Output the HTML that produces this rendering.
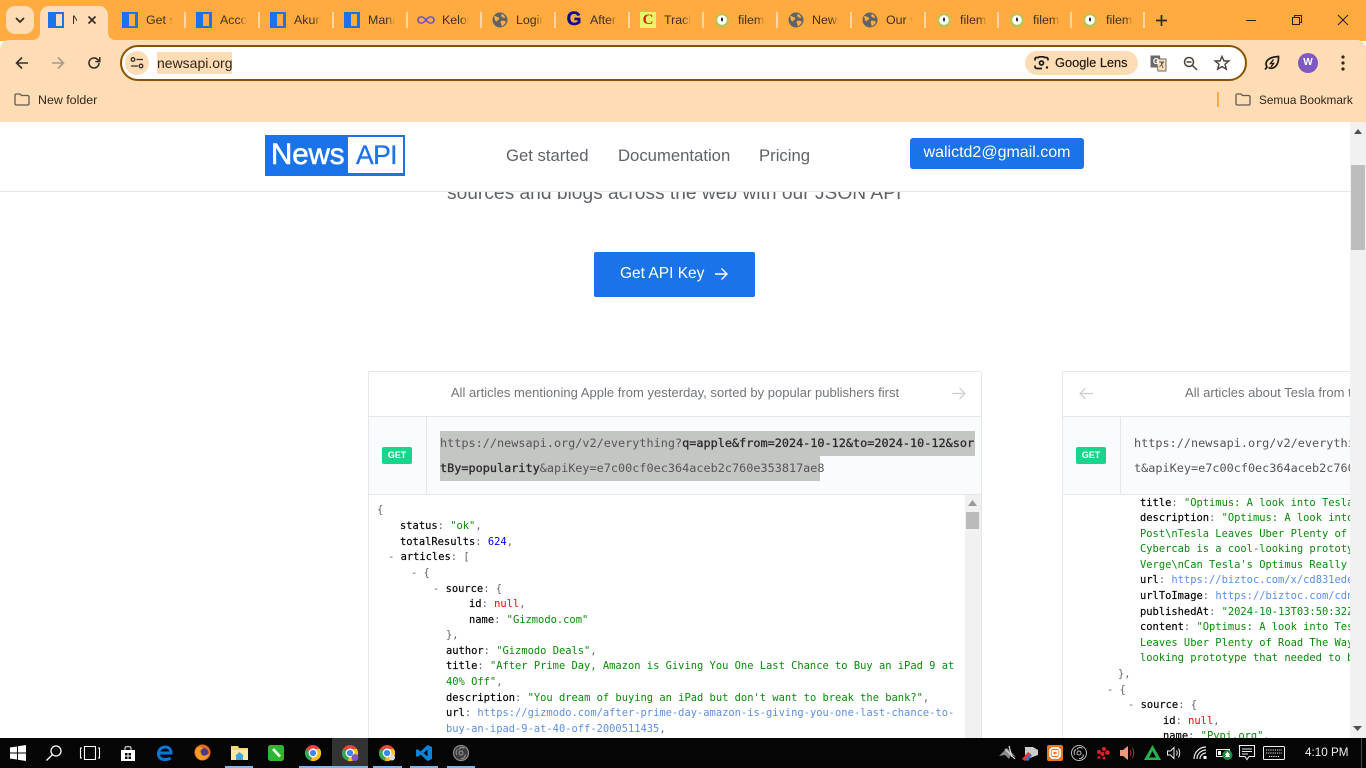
<!DOCTYPE html>
<html><head><meta charset="utf-8"><title>News API</title>
<style>
*{box-sizing:border-box}
html,body{margin:0;padding:0;width:1366px;height:768px;overflow:hidden;background:#fff;font-family:"Liberation Sans",sans-serif}
.a{position:absolute;white-space:nowrap}
svg{position:absolute;display:block;overflow:visible}
.tt{position:absolute;top:13px;width:27px;height:15px;overflow:hidden;font-size:12.4px;line-height:15px;color:#3e3022;white-space:pre;-webkit-mask-image:linear-gradient(90deg,#000 70%,transparent);mask-image:linear-gradient(90deg,#000 70%,transparent)}
.sep{position:absolute;top:12px;width:2px;height:16px;background:#ffd6a3}
.fav{position:absolute;top:12px;width:16px;height:16px;background:#1a73e8}
.fav i{position:absolute;left:7px;top:2px;width:6px;height:12px;background:#ffab40}
.j{position:absolute;margin-top:1px;font-family:"DejaVu Sans Mono","Liberation Mono",monospace;font-size:10.43px;line-height:15px;white-space:pre;color:#000;-webkit-text-stroke:.15px #000}
.s,.u,.r,.n,.p{-webkit-text-stroke:0}
.s{color:#0a8a0a}.u{color:#5b8fe6}.r{color:#f00}.n{color:#00f}.p{color:#666}
.url{position:absolute;font-family:"DejaVu Sans Mono","Liberation Mono",monospace;font-size:11.83px;line-height:25px;white-space:pre;color:#555}
.url b{color:#2a2a2a;font-weight:normal;-webkit-text-stroke:.3px #2a2a2a}
.get{position:absolute;top:447px;width:30px;height:17px;background:#17d68c;border-radius:2px;color:#fff;font-size:9px;font-weight:bold;line-height:17px;text-align:center}
.nav{position:absolute;top:146px;font-size:16.7px;line-height:20px;color:#5f6368;white-space:nowrap}
.ul{position:absolute;top:766px;height:2px;background:#76b9ed}
</style></head><body>

<!-- PAGE -->
<div class="a" style="left:0;top:122px;width:1366px;height:616px;background:#fff;overflow:hidden">
 <div class="a" style="left:0;width:1350px;top:-122px;height:768px">
  <div class="a" style="left:447px;top:183px;font-size:19.2px;line-height:22px;color:#5f6368;width:456px">sources and blogs across the web with our JSON API</div>
  <div class="a" style="left:0;top:122px;width:1350px;height:70px;background:#fff;border-bottom:1px solid #e6e6e6"></div>
  <div class="a" style="left:265px;top:135px;width:140px;height:41px;background:#1a73e8"></div>
  <div class="a" style="left:348px;top:137px;width:55px;height:36px;background:#fff"></div>
  <div class="a" style="left:271px;top:137px;font-size:29.5px;line-height:36px;color:#fff;-webkit-text-stroke:.6px #fff;letter-spacing:-.1px">News</div>
  <div class="a" style="left:356px;top:137px;font-size:26.5px;line-height:36px;color:#1a73e8;-webkit-text-stroke:.3px #1a73e8;letter-spacing:-.6px">API</div>
  <div class="nav" style="left:506px">Get started</div>
  <div class="nav" style="left:618px">Documentation</div>
  <div class="nav" style="left:759px">Pricing</div>
  <div class="a" style="left:910px;top:138px;width:174px;height:31px;background:#1a73e8;border-radius:3px;color:#fff;font-size:16px;line-height:30px;text-align:center">walictd2@gmail.com</div>
  <div class="a" style="left:594px;top:252px;width:161px;height:45px;background:#1a73e8;border-radius:2px"></div>
  <div class="a" style="left:620px;top:264px;font-size:15.5px;line-height:20px;color:#fff">Get API Key</div>
  <svg style="left:714px;top:267px" width="14" height="14" viewBox="0 0 14 14" fill="none" stroke="#fff" stroke-width="1.4"><path d="M1 7H13M7.5 1.5L13 7L7.5 12.5"/></svg>

  <!-- Card 1 -->
  <div class="a" style="left:368px;top:371px;width:614px;height:400px;background:#fff;border:1px solid #e4e6e9;border-radius:2px"></div>
  <div class="a" style="left:369px;top:416px;width:612px;height:79px;background:#fafbfd;border-top:1px solid #e4e6e9;border-bottom:1px solid #e4e6e9"></div>
  <div class="a" style="left:426px;top:417px;width:1px;height:77px;background:#e4e6e9"></div>
  <div class="a" style="left:369px;top:383px;width:612px;text-align:center;font-size:13px;line-height:20px;color:#70757a;letter-spacing:.025px">All articles mentioning Apple from yesterday, sorted by popular publishers first</div>
  <svg style="left:952px;top:387px" width="14" height="13" viewBox="0 0 14 13" fill="none" stroke="#ccc" stroke-width="1.2"><path d="M0 6.5H13M7.5 1L13 6.5L7.5 12"/></svg>
  <div class="get" style="left:382px">GET</div>
  <div class="a" style="left:440px;top:431px;width:535px;height:25px;background:#c4c6c4"></div>
  <div class="a" style="left:440px;top:456px;width:380px;height:25px;background:#c4c6c4"></div>
  <div class="url" style="left:440px;top:431px">https://newsapi.org/v2/everything?<b>q=apple&amp;from=2024-10-12&amp;to=2024-10-12&amp;sor</b></div>
  <div class="url" style="left:440px;top:456px"><b>tBy=popularity</b>&amp;apiKey=e7c00cf0ec364aceb2c760e353817ae8</div>

  <div class="a" style="left:965px;top:495px;width:16px;height:250px;background:#f1f1f1"></div>
  <svg style="left:968px;top:500px" width="9" height="6"><path d="M0 6L4.5 0L9 6Z" fill="#999"/></svg>
  <div class="a" style="left:966px;top:512px;width:13px;height:17px;background:#bbb"></div>

  <div class="j" style="left:377px;top:502px;color:#666;-webkit-text-stroke:0">{</div>
  <div class="j" style="left:400px;top:518px">status<span class="p">: </span><span class="s">"ok"</span><span class="p">,</span></div>
  <div class="j" style="left:400px;top:534px">totalResults<span class="p">: </span><span class="n">624</span><span class="p">,</span></div>
  <div class="j" style="left:388px;top:549px"><span class="p">- </span>articles<span class="p">: [</span></div>
  <div class="j p" style="left:411px;top:565px;color:#666">- {</div>
  <div class="j" style="left:433px;top:581px"><span class="p">- </span>source<span class="p">: {</span></div>
  <div class="j" style="left:469px;top:596px">id<span class="p">: </span><span class="r">null</span><span class="p">,</span></div>
  <div class="j" style="left:469px;top:612px">name<span class="p">: </span><span class="s">"Gizmodo.com"</span></div>
  <div class="j p" style="left:446px;top:627px;color:#666">},</div>
  <div class="j" style="left:446px;top:643px">author<span class="p">: </span><span class="s">"Gizmodo Deals"</span><span class="p">,</span></div>
  <div class="j" style="left:446px;top:658px">title<span class="p">: </span><span class="s">"After Prime Day, Amazon is Giving You One Last Chance to Buy an iPad 9 at</span></div>
  <div class="j s" style="left:446px;top:674px">40% Off"<span class="p">,</span></div>
  <div class="j" style="left:446px;top:690px">description<span class="p">: </span><span class="s">"You dream of buying an iPad but don't want to break the bank?"</span><span class="p">,</span></div>
  <div class="j" style="left:446px;top:705px">url<span class="p">: </span><span class="u">https://gizmodo.com/after-prime-day-amazon-is-giving-you-one-last-chance-to-</span></div>
  <div class="j u" style="left:446px;top:721px">buy-an-ipad-9-at-40-off-2000511435<span class="p">,</span></div>
  <div class="j" style="left:446px;top:737px">urlToImage<span class="p">: </span></div>

  <!-- Card 2 -->
  <div class="a" style="left:1062px;top:371px;width:400px;height:400px;background:#fff;border:1px solid #e4e6e9;border-radius:2px"></div>
  <div class="j" style="left:1140px;top:495px">title<span class="p">: </span><span class="s">"Optimus: A look into Tesla's</span></div>
  <div class="j" style="left:1140px;top:510px">description<span class="p">: </span><span class="s">"Optimus: A look into Tesla</span></div>
  <div class="j s" style="left:1140px;top:526px">Post\nTesla Leaves Uber Plenty of Road</div>
  <div class="j s" style="left:1140px;top:541px">Cybercab is a cool-looking prototype that</div>
  <div class="j s" style="left:1140px;top:557px">Verge\nCan Tesla's Optimus Really Do</div>
  <div class="j" style="left:1140px;top:572px">url<span class="p">: </span><span class="u">https://biztoc.com/x/cd831ede0123</span></div>
  <div class="j" style="left:1140px;top:588px">urlToImage<span class="p">: </span><span class="u">https://biztoc.com/cdn/abc</span></div>
  <div class="j" style="left:1140px;top:604px">publishedAt<span class="p">: </span><span class="s">"2024-10-13T03:50:32Z"</span></div>
  <div class="j" style="left:1140px;top:619px">content<span class="p">: </span><span class="s">"Optimus: A look into Tesla's</span></div>
  <div class="j s" style="left:1140px;top:635px">Leaves Uber Plenty of Road The Waymo</div>
  <div class="j s" style="left:1140px;top:650px">looking prototype that needed to be</div>
  <div class="j p" style="left:1118px;top:666px;color:#666">},</div>
  <div class="j p" style="left:1107px;top:682px;color:#666">- {</div>
  <div class="j" style="left:1128px;top:697px"><span class="p">- </span>source<span class="p">: {</span></div>
  <div class="j" style="left:1163px;top:713px">id<span class="p">: </span><span class="r">null</span><span class="p">,</span></div>
  <div class="j" style="left:1163px;top:728px">name<span class="p">: </span><span class="s">"Pypi.org"</span><span class="p">,</span></div>
  <div class="a" style="left:1063px;top:372px;width:400px;height:44px;background:#fff"></div>
  <div class="a" style="left:1063px;top:416px;width:400px;height:79px;background:#fafbfd;border-top:1px solid #e4e6e9;border-bottom:1px solid #e4e6e9"></div>
  <div class="a" style="left:1120px;top:417px;width:1px;height:77px;background:#e4e6e9"></div>
  <div class="a" style="left:1185px;top:383px;font-size:13px;line-height:20px;color:#70757a;letter-spacing:.025px">All articles about Tesla from the last month</div>
  <svg style="left:1079px;top:387px" width="14" height="13" viewBox="0 0 14 13" fill="none" stroke="#ccc" stroke-width="1.2"><path d="M14 6.5H1M6.5 1L1 6.5L6.5 12"/></svg>
  <div class="get" style="left:1076px">GET</div>
  <div class="url" style="left:1134px;top:431px">https://newsapi.org/v2/everything?q=tesla</div>
  <div class="url" style="left:1134px;top:456px">t&amp;apiKey=e7c00cf0ec364aceb2c760e353817ae8</div>
 </div>
 <!-- page scrollbar -->
 <div class="a" style="left:1350px;top:0;width:16px;height:616px;background:#f1f1f1"></div>
 <svg style="left:1354px;top:7px" width="8" height="5"><path d="M0 5L4 0L8 5Z" fill="#505050"/></svg>
 <div class="a" style="left:1351px;top:43px;width:14px;height:85px;background:#bdbdbd"></div>
 <svg style="left:1353px;top:604px" width="9" height="5"><path d="M0 0L4.5 5L9 0Z" fill="#505050"/></svg>
</div>

<!-- TAB STRIP -->
<div class="a" style="left:0;top:0;width:1366px;height:41px;background:#ffab40"></div>
<div class="a" style="left:0;top:40px;width:1366px;height:82px;background:#fedcb5;border-radius:9px 9px 0 0"></div>
<div class="a" style="left:6px;top:6px;width:28px;height:28px;background:#ffdcb4;border-radius:9px"></div>
<svg style="left:15px;top:17px" width="10" height="7" fill="none" stroke="#3a2c1c" stroke-width="1.8"><path d="M1 1L5 5L9 1"/></svg>
<div class="a" style="left:40px;top:6px;width:68px;height:35px;background:#fedcb5;border-radius:9px 9px 0 0"></div>
<svg style="left:32px;top:32px" width="8" height="8"><path d="M0 8C5 8 8 5 8 0V8Z" fill="#fedcb5"/></svg>
<svg style="left:108px;top:32px" width="8" height="8"><path d="M8 8C3 8 0 5 0 0V8Z" fill="#fedcb5"/></svg>
<div class="fav" style="left:48px"><i style="left:8px;background:#fedcb5"></i></div>
<div class="tt" style="left:72px;width:5px;-webkit-mask-image:none;mask-image:none">N</div>
<svg style="left:88px;top:16px" width="8" height="8" stroke="#2e2a26" stroke-width="1.6"><path d="M0.5 0.5L7.5 7.5M7.5 0.5L0.5 7.5"/></svg>

<div class="fav" style="left:122px"><i></i></div><div class="tt" style="left:146px">Get s</div><div class="sep" style="left:184px"></div>
<div class="fav" style="left:196px"><i></i></div><div class="tt" style="left:220px">Acco</div><div class="sep" style="left:258px"></div>
<div class="fav" style="left:270px"><i></i></div><div class="tt" style="left:294px">Akun</div><div class="sep" style="left:332px"></div>
<div class="fav" style="left:344px"><i></i></div><div class="tt" style="left:368px">Mana</div><div class="sep" style="left:406px"></div>
<svg style="left:418px;top:16px" width="16" height="8" viewBox="0 0 16 10" preserveAspectRatio="none" fill="none" stroke="#6a4fc9" stroke-width="1.7"><path d="M8 5C6 2 4.8 1 3.4 1A3.4 4 0 0 0 3.4 9C4.8 9 6 8 8 5C10 2 11.2 1 12.6 1A3.4 4 0 0 1 12.6 9C11.2 9 10 8 8 5Z"/></svg>
<div class="tt" style="left:442px">Kelol</div><div class="sep" style="left:480px"></div>
<svg style="left:492px;top:12px" width="16" height="16" viewBox="0 0 16 16"><circle cx="8" cy="8" r="7.5" fill="#5f6368"/><path d="M2 4C4 4 5 5 6.5 5.5C8 6 7 8 5.5 8C5 10 4 10 3 8ZM10 2C12 3 13 4 13 6C11 6 10 5 9 4ZM9 9C11 8 13 9 14 10C13 12 11 14 9.500 14.500C10 12 8 11 9 9Z" fill="#ffab40"/></svg>
<div class="tt" style="left:516px">Login</div><div class="sep" style="left:554px"></div>
<div class="a" style="left:566px;top:10px;font-size:19px;line-height:20px;font-weight:bold;color:#0a0a96;width:16px;text-align:center;-webkit-text-stroke:.4px #0a0a96">G</div>
<div class="tt" style="left:590px">After</div><div class="sep" style="left:628px"></div>
<div class="a" style="left:640px;top:12px;width:16px;height:16px;background:#e6f76a;color:#e02010;font:bold 15px/16px 'Liberation Serif',serif;text-align:center">C</div>
<div class="tt" style="left:664px">Track</div><div class="sep" style="left:702px"></div>
<svg style="left:714px;top:12px" width="16" height="16" viewBox="0 0 16 16"><circle cx="8" cy="8.500" r="7" fill="#b6c455"/><circle cx="8" cy="8" r="4.800" fill="#fff"/><ellipse cx="8" cy="7.500" rx="1" ry="2" fill="#222"/></svg>
<div class="tt" style="left:738px">filem</div><div class="sep" style="left:776px"></div>
<svg style="left:788px;top:12px" width="16" height="16" viewBox="0 0 16 16"><circle cx="8" cy="8" r="7.5" fill="#5f6368"/><path d="M2 4C4 4 5 5 6.5 5.5C8 6 7 8 5.5 8C5 10 4 10 3 8ZM10 2C12 3 13 4 13 6C11 6 10 5 9 4ZM9 9C11 8 13 9 14 10C13 12 11 14 9.500 14.500C10 12 8 11 9 9Z" fill="#ffab40"/></svg>
<div class="tt" style="left:812px">News</div><div class="sep" style="left:850px"></div>
<svg style="left:862px;top:12px" width="16" height="16" viewBox="0 0 16 16"><circle cx="8" cy="8" r="7.5" fill="#5f6368"/><path d="M2 4C4 4 5 5 6.5 5.5C8 6 7 8 5.5 8C5 10 4 10 3 8ZM10 2C12 3 13 4 13 6C11 6 10 5 9 4ZM9 9C11 8 13 9 14 10C13 12 11 14 9.500 14.500C10 12 8 11 9 9Z" fill="#ffab40"/></svg>
<div class="tt" style="left:886px">Our v</div><div class="sep" style="left:924px"></div>
<svg style="left:936px;top:12px" width="16" height="16" viewBox="0 0 16 16"><circle cx="8" cy="8.500" r="7" fill="#b6c455"/><circle cx="8" cy="8" r="4.800" fill="#fff"/><ellipse cx="8" cy="7.500" rx="1" ry="2" fill="#222"/></svg>
<div class="tt" style="left:960px">filem</div><div class="sep" style="left:997px"></div>
<svg style="left:1009px;top:12px" width="16" height="16" viewBox="0 0 16 16"><circle cx="8" cy="8.500" r="7" fill="#b6c455"/><circle cx="8" cy="8" r="4.800" fill="#fff"/><ellipse cx="8" cy="7.500" rx="1" ry="2" fill="#222"/></svg>
<div class="tt" style="left:1033px">filem</div><div class="sep" style="left:1070px"></div>
<svg style="left:1082px;top:12px" width="16" height="16" viewBox="0 0 16 16"><circle cx="8" cy="8.500" r="7" fill="#b6c455"/><circle cx="8" cy="8" r="4.800" fill="#fff"/><ellipse cx="8" cy="7.500" rx="1" ry="2" fill="#222"/></svg>
<div class="tt" style="left:1106px">filem</div><div class="sep" style="left:1143px"></div>
<svg style="left:1156px;top:15px" width="11" height="11" stroke="#2e2a26" stroke-width="1.700"><path d="M5.500 0V11M0 5.500H11"/></svg>
<svg style="left:1246px;top:20px" width="10" height="1"><path d="M0 .5H10" stroke="#222" stroke-width="1"/></svg>
<svg style="left:1292px;top:15px" width="10" height="10" fill="none" stroke="#222"><path d="M.5 2.500H7.500V9.500H.5ZM2.500 2.500V.5H9.500V7.500H7.500"/></svg>
<svg style="left:1338px;top:15px" width="10" height="10" stroke="#222"><path d="M0 0L10 10M10 0L0 10"/></svg>

<!-- TOOLBAR -->
<svg style="left:15px;top:56px" width="14" height="14" fill="none" stroke="#3a3028" stroke-width="1.600"><path d="M13 7H1.500M7 1.500L1.500 7L7 12.500"/></svg>
<svg style="left:51px;top:56px" width="14" height="14" fill="none" stroke="#a89a88" stroke-width="1.600"><path d="M1 7H12.500M7 1.500L12.500 7L7 12.500"/></svg>
<svg style="left:87px;top:56px" width="14" height="14" viewBox="0 0 14 14" fill="none" stroke="#3a3028" stroke-width="1.600"><path d="M12 7A5 5 0 1 1 10.500 3.400L12.500 5.200"/><path d="M12.800 1V5.600H8.300" stroke-width="1.500"/></svg>
<div class="a" style="left:120px;top:45px;width:1127px;height:36px;background:#fff;border:2px solid #8a5300;border-radius:18px"></div>
<div class="a" style="left:125px;top:51px;width:24px;height:24px;background:#fedcb5;border-radius:50%"></div>
<svg style="left:130px;top:57px" width="14" height="12" fill="none" stroke="#3a3028" stroke-width="1.300"><circle cx="3" cy="2.500" r="1.800"/><circle cx="11" cy="9" r="1.800"/><path d="M6.500 2.500H13M1 9H8"/></svg>
<div class="a" style="left:157px;top:52px;width:75px;height:22px;background:#fedcb5"></div>
<div class="a" style="left:157px;top:54px;font-size:14px;line-height:18px;color:#30261a">newsapi.org</div>
<div class="a" style="left:1025px;top:51px;width:113px;height:24px;background:#fedcb5;border-radius:12px"></div>
<svg style="left:1034px;top:56px" width="15" height="14" fill="none" stroke="#1e1a16" stroke-width="1.700"><path d="M1 4.500V3.500Q1 1.500 3 1.500H4.500L5.500 .8H9.500L10.500 1.500H12Q14 1.500 14 3.500V4.500M1 9.500V10.500Q1 12.500 3 12.500H8"/><circle cx="7.500" cy="7" r="2"/><circle cx="13" cy="11.500" r="1.200" fill="#1e1a16" stroke="none"/></svg>
<div class="a" style="left:1055px;top:55px;font-size:12.8px;line-height:16px;color:#1e1810;-webkit-text-stroke:.15px #1e1810">Google Lens</div>
<svg style="left:1150px;top:55px" width="17" height="17" viewBox="0 0 17 17"><path d="M.5.500H10L11 12.500H.5Z" fill="#6a6a6a"/><path d="M6 4H16V16H8Z" fill="#fedcb5" stroke="#6a6a6a"/><text x="3" y="9" font-size="8" font-weight="bold" fill="#fff" font-family="Liberation Sans">G</text><path d="M9 7H14M11 7L13 13M13.500 7L9.500 12" stroke="#555" fill="none" stroke-width=".9"/></svg>
<svg style="left:1183px;top:56px" width="15" height="15" fill="none" stroke="#4a4036" stroke-width="1.500"><circle cx="6" cy="6" r="4.500"/><path d="M9.500 9.500L14 14M3.500 6H8.500"/></svg>
<svg style="left:1214px;top:55px" width="16" height="16" viewBox="0 0 16 16" fill="none" stroke="#4a4036" stroke-width="1.400"><path d="M8 1.500L10 6H14.800L11 9.200L12.300 14.200L8 11.500L3.700 14.200L5 9.200L1.200 6H6Z"/></svg>
<svg style="left:1264px;top:55px" width="16" height="16" viewBox="0 0 16 16" fill="none" stroke="#1e1a16" stroke-width="1.700"><path d="M1 14.500L3 12C0 7 4 2 14.500 1.500C15 11 9 15 4.500 12.500"/><path d="M9.500 4.500L6.500 8.500H9.500L7 12" stroke-width="1.400"/></svg>
<div class="a" style="left:1298px;top:53px;width:20px;height:20px;background:#7e57c2;border-radius:50%;color:#fff;font-size:10px;font-weight:bold;line-height:20px;text-align:center">W</div>
<svg style="left:1341px;top:55px" width="4" height="16" fill="#30261a"><circle cx="2" cy="2" r="1.600"/><circle cx="2" cy="8" r="1.600"/><circle cx="2" cy="14" r="1.600"/></svg>

<!-- BOOKMARKS -->
<svg style="left:14px;top:93px" width="16" height="13" fill="none" stroke="#5f5a54" stroke-width="1.300"><path d="M1 2.500Q1 1 2.500 1H6L7.500 2.500H13.500Q15 2.500 15 4V10.500Q15 12 13.500 12H2.500Q1 12 1 10.500Z"/></svg>
<div class="a" style="left:38px;top:93px;font-size:12.4px;line-height:15px;color:#30261a">New folder</div>
<div class="a" style="left:1217px;top:92px;width:2px;height:15px;background:#ffab40"></div>
<svg style="left:1235px;top:93px" width="16" height="13" fill="none" stroke="#5f5a54" stroke-width="1.300"><path d="M1 2.500Q1 1 2.500 1H6L7.500 2.500H13.500Q15 2.500 15 4V10.500Q15 12 13.500 12H2.500Q1 12 1 10.500Z"/></svg>
<div class="a" style="left:1259px;top:93px;font-size:11.8px;line-height:15px;color:#30261a">Semua Bookmark</div>

<!-- TASKBAR -->
<div class="a" style="left:0;top:738px;width:1366px;height:30px;background:#050505"></div>
<div class="a" style="left:332px;top:738px;width:36px;height:30px;background:#333"></div>
<div class="ul" style="left:225px;width:28px"></div><div class="ul" style="left:299px;width:33px"></div><div class="ul" style="left:332px;width:36px"></div><div class="ul" style="left:373px;width:29px"></div><div class="ul" style="left:410px;width:28px"></div><div class="ul" style="left:447px;width:28px"></div>
<svg style="left:10px;top:745px" width="16" height="16" fill="#fff"><path d="M0 2.500L7 1.500V7.500H0ZM8 1.300L16 0V7.500H8ZM0 8.500H7V14.500L0 13.500ZM8 8.500H16V16L8 14.700Z"/></svg>
<svg style="left:46px;top:745px" width="16" height="16" fill="none" stroke="#fff" stroke-width="1.300"><circle cx="10" cy="6" r="5"/><path d="M6.500 9.500L.5 15.500"/></svg>
<svg style="left:80px;top:746px" width="20" height="14" fill="none" stroke="#fff" stroke-width="1.100"><path d="M4.500.5H15.500V13.500H4.500ZM2 2H.5V12H2M18 2H19.500V12H18"/></svg>
<svg style="left:121px;top:746px" width="14" height="15" fill="#fff"><path d="M0 4H14V15H0Z"/><path d="M4 4V2Q4 .8 5.500 .8H8.500Q10 .8 10 2V4" fill="none" stroke="#fff"/><path d="M4 7H6.500V9.500H4ZM7.500 7H10V9.500H7.500ZM4 10.500H6.500V13H4ZM7.500 10.500H10V13H7.500Z" fill="#050505"/></svg>
<svg style="left:157px;top:745px" width="16" height="16" viewBox="0 0 16 16" fill="none" stroke="#0a78d7" stroke-width="3"><path d="M2.500 8H14C14 4 11.500 2 8.500 2C4 2 1.500 5 1.500 9C1.500 13 4.500 14.500 8 14.500C10 14.500 12 14 13.500 13"/></svg>
<svg style="left:194px;top:744px" width="17" height="17" viewBox="0 0 17 17"><circle cx="8.500" cy="8.500" r="8" fill="#e66a1a"/><circle cx="9.500" cy="9" r="5" fill="#4a3a8c"/><path d="M1 6C3 2 8 2 9 5C7 5 6 7 7 9C8 13 13 12 15 9C15 14 10 16.500 6.500 16C3 15 .5 10 1 6Z" fill="#f59a23"/></svg>
<svg style="left:231px;top:745px" width="17" height="15" viewBox="0 0 17 15"><path d="M0 1H7L8 3H17V15H0Z" fill="#f5d77a"/><path d="M0 5H17V15H0Z" fill="#ffe9a6"/><path d="M5 10H12V15H5Z" fill="#3fa7e0"/><path d="M8.500 7L13 11H4Z" fill="#3fa7e0"/></svg>
<svg style="left:268px;top:745px" width="16" height="16" viewBox="0 0 16 16"><rect width="16" height="16" rx="2.500" fill="#2fb52f"/><path d="M4 5L6 3L13 10.500L11 12.500Z" fill="#eafbe6"/></svg>
<svg style="left:305px;top:745px" width="16" height="16" viewBox="0 0 16 16"><circle cx="8" cy="8" r="8" fill="#e8453c"/><path d="M8 8L1 4A8 8 0 0 0 6 15.800Z" fill="#34a853"/><path d="M8 8L6 15.800A8 8 0 0 0 15 4H8Z" fill="#fbc116"/><circle cx="8" cy="8" r="3.800" fill="#4285f4" stroke="#fff" stroke-width="1.300"/></svg>
<svg style="left:342px;top:745px" width="16" height="16" viewBox="0 0 16 16"><circle cx="8" cy="8" r="8" fill="#e8453c"/><path d="M8 8L1 4A8 8 0 0 0 6 15.800Z" fill="#34a853"/><path d="M8 8L6 15.800A8 8 0 0 0 15 4H8Z" fill="#fbc116"/><circle cx="8" cy="8" r="3.800" fill="#4285f4" stroke="#fff" stroke-width="1.300"/><circle cx="13" cy="12.500" r="3.500" fill="#7e57c2"/></svg>
<svg style="left:379px;top:745px" width="16" height="16" viewBox="0 0 16 16"><circle cx="8" cy="8" r="8" fill="#e8453c"/><path d="M8 8L1 4A8 8 0 0 0 6 15.800Z" fill="#34a853"/><path d="M8 8L6 15.800A8 8 0 0 0 15 4H8Z" fill="#fbc116"/><circle cx="8" cy="8" r="3.800" fill="#4285f4" stroke="#fff" stroke-width="1.300"/><circle cx="13" cy="12.500" r="3" fill="#ddd"/></svg>
<svg style="left:416px;top:745px" width="16" height="16" viewBox="0 0 16 16"><path d="M11.500 0L16 2V14L11.500 16L4.500 9.500L1.500 12L0 11V5L1.500 4L4.500 6.500ZM11.500 4.500L7.500 8L11.500 11.500Z" fill="#0a84d8"/></svg>
<svg style="left:453px;top:745px" width="16" height="16" viewBox="0 0 16 16" fill="none" stroke="#8a8a8a" stroke-width="1.200"><circle cx="8" cy="8" r="7.500" fill="#3a3a3a"/><circle cx="8" cy="8" r="2"/><path d="M6 4.500C7 2 10 2 11.500 3.500M12 9.500C13 12 10 14 8 13.500M4 10C2.500 8 3 5.500 5 4.500"/></svg>

<!-- tray -->
<svg style="left:999px;top:745px" width="18" height="15" viewBox="0 0 18 15"><path d="M0 11L8 3L17 12L12 10L10 14L6 10Z" fill="#888"/><path d="M6 4L16 14M10 1L13 12" stroke="#ddd" stroke-width="1.200"/></svg>
<svg style="left:1022px;top:745px" width="17" height="16" viewBox="0 0 17 16"><path d="M3 2H11L16 5V10L8 13L3 10Z" fill="#ccc"/><path d="M0 14L6 7L9 9L3 16Z" fill="#e33"/><path d="M3 15L8 9L10 10L6 16Z" fill="#37c"/></svg>
<div class="a" style="left:1047px;top:745px;width:16px;height:16px;background:#e87722;border-radius:2px"></div>
<svg style="left:1049px;top:747px" width="12" height="12" fill="none" stroke="#fff" stroke-width="1.700"><path d="M3 1H9L11 3V9L9 11H3L1 9V3ZM3.500 4H8.500V8H3.500Z"/></svg>
<svg style="left:1071px;top:745px" width="16" height="16" viewBox="0 0 16 16" fill="none" stroke="#bbb" stroke-width="1"><circle cx="8" cy="8" r="7.500"/><circle cx="8" cy="8" r="2"/><path d="M6 4.500C7 2 10 2 11.500 3.500M12 9.500C13 12 10 14 8 13.500M4 10C2.500 8 3 5.500 5 4.500"/></svg>
<svg style="left:1096px;top:746px" width="14" height="14" fill="#e3202a"><circle cx="8" cy="3" r="2"/><circle cx="3" cy="6" r="2"/><circle cx="11.500" cy="6.500" r="2.300"/><circle cx="6.500" cy="8" r="2"/><circle cx="3" cy="11.500" r="1.400"/><circle cx="8" cy="12" r="1.500"/></svg>
<svg style="left:1120px;top:745px" width="15" height="16" viewBox="0 0 15 16"><path d="M0 5H3L8 1V15L3 11H0Z" fill="#f0997a"/><path d="M10 5Q12 8 10 11M12.500 3Q15 8 12.500 13" stroke="#a33" fill="none"/></svg>
<svg style="left:1144px;top:745px" width="17" height="16" viewBox="0 0 17 16"><path d="M8.500 0L17 15H0Z" fill="#27b24a"/><path d="M8.500 6L12 12.500H5Z" fill="#050505"/></svg>
<svg style="left:1167px;top:746px" width="16" height="14" fill="none" stroke="#eee"><path d="M.5 5H3.500L7 1.500V12.500L3.500 9H.5ZM9.500 4.500Q11 7 9.500 9.500M11.500 2.500Q14 7 11.500 11.500"/></svg>
<svg style="left:1193px;top:746px" width="14" height="14" fill="none" stroke="#eee" stroke-width="1.200"><path d="M1 13A12 12 0 0 1 13 1M4 13A9 9 0 0 1 13 4M7 13A6 6 0 0 1 13 7"/><rect x="10.500" y="10" width="3" height="3" fill="#fff" stroke="none"/></svg>
<svg style="left:1216px;top:745px" width="17" height="15" viewBox="0 0 17 15"><rect x=".5" y="4.500" width="13" height="7" fill="none" stroke="#eee"/><rect x="2" y="6" width="3" height="4" fill="#fff"/><circle cx="11.500" cy="10" r="5" fill="#1e8e3e"/><path d="M11.500 6.500L14 10H9ZM11.500 8L14 12H9Z" fill="#fff"/></svg>
<svg style="left:1239px;top:745px" width="16" height="16" fill="none" stroke="#eee" stroke-width="1.100"><path d="M.5.5H15.500V11.500H10L8 14.500L6 11.500H.5ZM3 4H13M3 6.500H13M3 9H9"/></svg>
<svg style="left:1263px;top:746px" width="22" height="14" fill="none" stroke="#eee"><rect x=".5" y=".5" width="21" height="13" rx="1"/><path d="M3 4H19M3 7H19M6 10.500H16" stroke-dasharray="1.200 1"/></svg>
<div class="a" style="left:1305px;top:745px;font-size:11.7px;line-height:15px;color:#eee">4:10 PM</div>
<div class="a" style="left:1361px;top:738px;width:1px;height:30px;background:#444"></div>
</body></html>
